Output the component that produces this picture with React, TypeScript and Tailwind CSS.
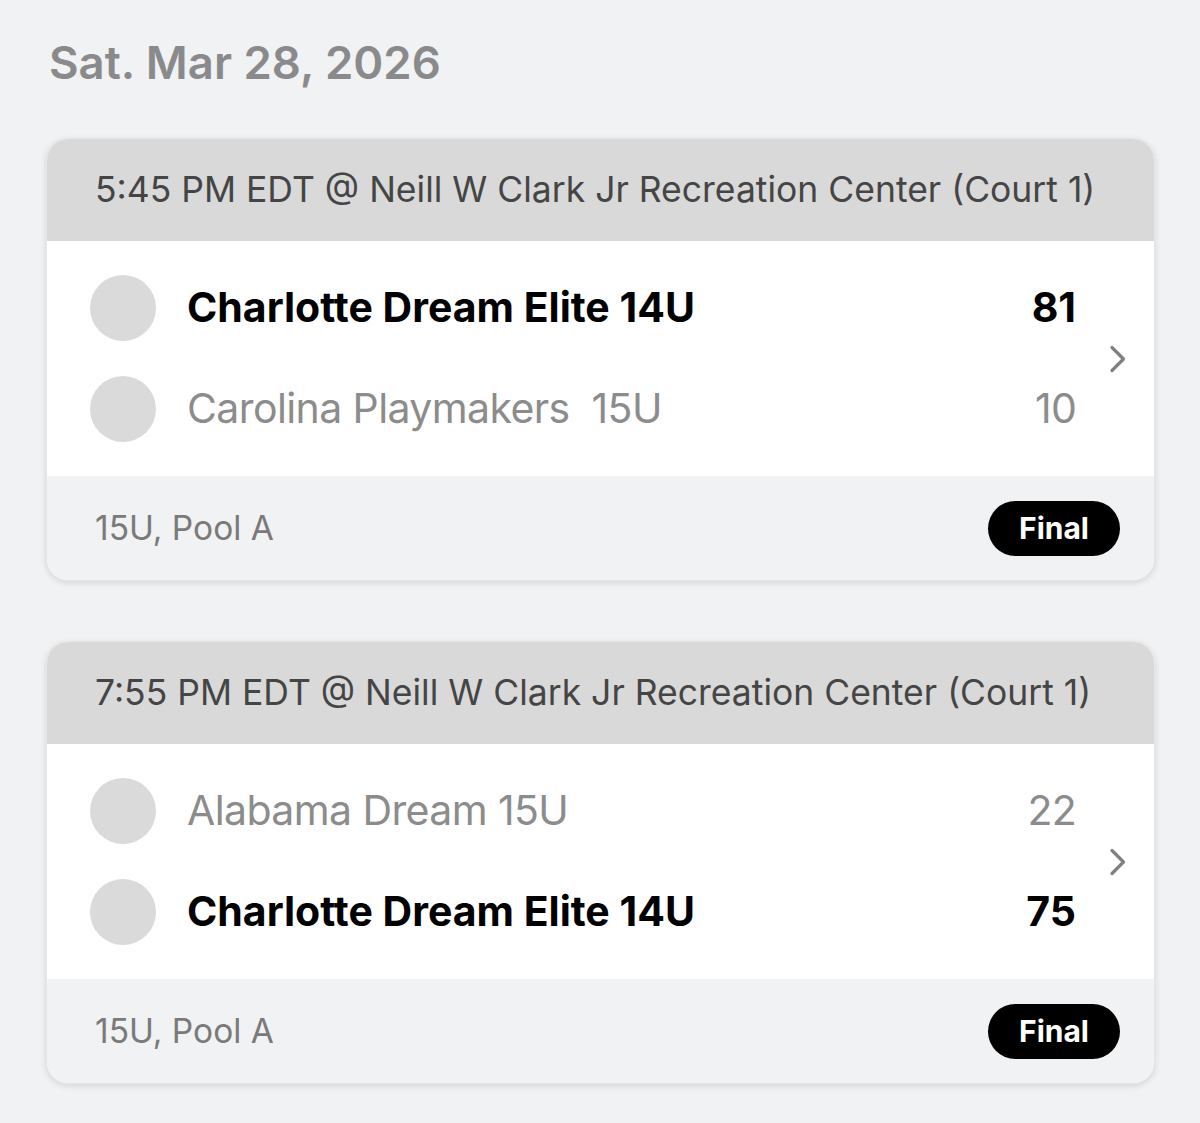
import React from "react";

type Team = { name: string; score: number; winner: boolean };
type Game = { time: string; venue: string; teams: Team[]; pool: string; status: string };

const games: Game[] = [
  {
    time: "5:45 PM EDT",
    venue: "Neill W Clark Jr Recreation Center (Court 1)",
    teams: [
      { name: "Charlotte Dream Elite 14U", score: 81, winner: true },
      { name: "Carolina Playmakers\u00a0 15U", score: 10, winner: false },
    ],
    pool: "15U, Pool A",
    status: "Final",
  },
  {
    time: "7:55 PM EDT",
    venue: "Neill W Clark Jr Recreation Center (Court 1)",
    teams: [
      { name: "Alabama Dream 15U", score: 22, winner: false },
      { name: "Charlotte Dream Elite 14U", score: 75, winner: true },
    ],
    pool: "15U, Pool A",
    status: "Final",
  },
];

function Chevron() {
  return (
    <svg width="20" height="30" viewBox="0 0 20 30" fill="none">
      <path d="M4 3.5 L15.5 15 L4 26.5" stroke="#808080" strokeWidth="3.2" strokeLinecap="round" strokeLinejoin="round" />
    </svg>
  );
}

function GameCard({ game }: { game: Game }) {
  return (
    <div className="rounded-[22px] overflow-hidden bg-white shadow-[0_2px_6px_rgba(0,0,0,0.12)] border border-[#e6e6e8]">
      <div className="h-[102px] bg-[#d9d9d9] flex items-center pl-[48px] text-[35.5px] text-[#454545]">
        {game.time} @ {game.venue}
      </div>
      <div className="flex items-center pl-[43px] pr-[26px] py-[34px]">
        <div className="flex-1 flex flex-col gap-[35px]">
          {game.teams.map((t, i) => (
            <div key={i} className="flex items-center h-[66px]">
              <div className="w-[66px] h-[66px] rounded-full bg-[#dadada] shrink-0" />
              <div
                className={
                  "ml-[31px] flex-1 text-[41px] whitespace-nowrap " +
                  (t.winner ? "font-bold text-black" : "text-[#8c8c8c] tracking-[-0.6px]")
                }
              >
                {t.name}
              </div>
              <div
                className={
                  "text-[41px] text-right " +
                  (t.winner ? "font-bold text-black" : "text-[#8c8c8c] tracking-[-0.8px]")
                }
              >
                {t.score}
              </div>
            </div>
          ))}
        </div>
        <div className="ml-[32px]">
          <Chevron />
        </div>
      </div>
      <div className="h-[104px] bg-[#f1f2f4] flex items-center justify-between pl-[48px] pr-[34px]">
        <span className="text-[33.5px] text-[#7a7a7a]">{game.pool}</span>
        <span className="h-[55px] px-[31px] rounded-full bg-black text-white font-bold text-[30px] flex items-center">
          {game.status}
        </span>
      </div>
    </div>
  );
}

export default function App() {
  return (
    <div
      className="min-h-[1123px] bg-[#f1f2f4] px-[46px] pt-[33px] pb-[40px]"
      style={{ fontFamily: "Inter, 'Noto Sans', sans-serif" }}
    >
      <h1 className="text-[45.5px] font-semibold text-[#8a8a8c] pl-[3px] leading-[60px]">Sat. Mar 28, 2026</h1>
      <div className="mt-[45px] flex flex-col gap-[60px] w-[1109px]">
        {games.map((g, i) => (
          <GameCard key={i} game={g} />
        ))}
      </div>
    </div>
  );
}
